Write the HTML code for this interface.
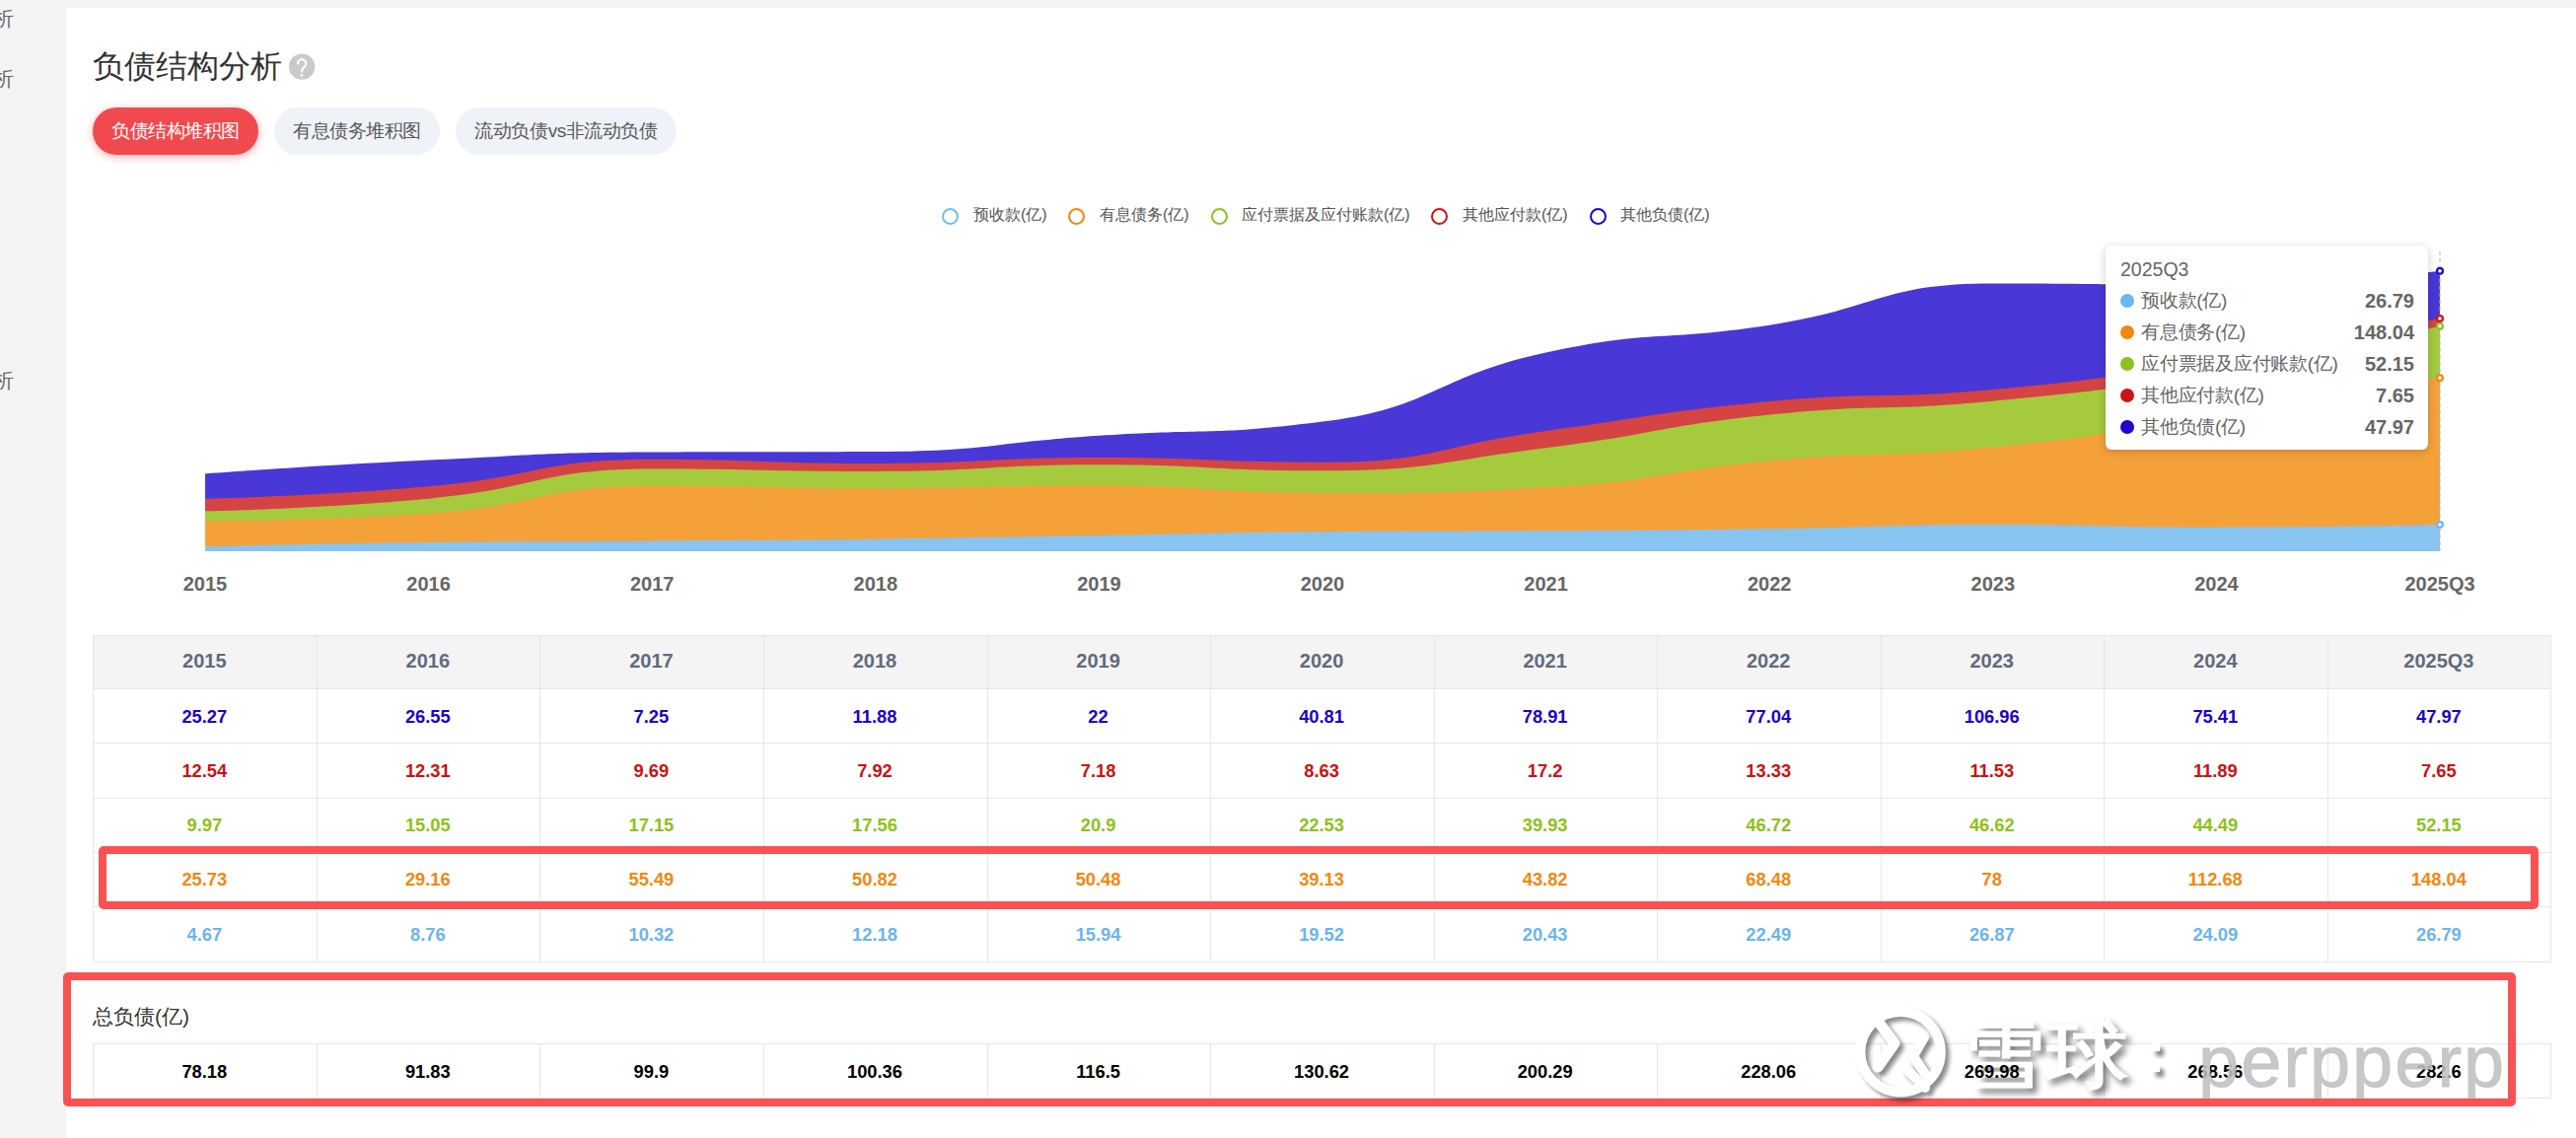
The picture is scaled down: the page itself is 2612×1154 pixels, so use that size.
<!DOCTYPE html>
<html><head><meta charset="utf-8">
<style>
*{box-sizing:border-box;margin:0;padding:0}
html,body{width:2612px;height:1154px;overflow:hidden}
body{background:#f4f4f4;font-family:"Liberation Sans",sans-serif;position:relative}
.side{position:absolute;left:-7px;font-size:21px;color:#666;line-height:21px}
.panel{position:absolute;left:67px;top:8px;width:2545px;height:1146px;background:#fff}
.abs{position:absolute;white-space:nowrap}
.title{left:94px;top:47px;font-size:32px;line-height:40px;color:#333}
.qm{left:293px;top:54px;width:26px;height:27px;border-radius:50%;background:#c8c8c8;color:#fff;font-size:21px;text-align:center;line-height:28px}
.tab{top:109px;height:48px;border-radius:24px;background:#eff2f7;color:#5a5a5a;font-size:19px;letter-spacing:-0.43px;line-height:48px;text-align:center}
.tab.on{background:#f04a4f;color:#fff;box-shadow:0 2px 9px rgba(240,74,79,.45)}
.lg{top:208px;font-size:16px;line-height:20px;color:#555}
.lc{top:210.5px;width:17px;height:17px;border-radius:50%;border:2.8px solid}
.xl{position:absolute;top:578px;width:120px;text-align:center;font-size:20px;font-weight:bold;color:#666;line-height:28px}
.tip{left:2135px;top:249px;width:327px;height:207px;background:#fff;border-radius:6px;box-shadow:0 2px 10px rgba(0,0,0,.2)}
.tt{left:2150px;top:261px;font-size:19.5px;line-height:24px;color:#666}
.tr{left:2143px;width:305px;height:32px}
.tr .d{position:absolute;left:6.5px;top:9px;width:14px;height:14px;border-radius:50%}
.tr .l{position:absolute;left:28px;top:4px;font-size:19px;letter-spacing:-0.25px;line-height:24px;color:#666}
.tr .v{position:absolute;right:0;top:3.5px;font-size:20px;line-height:24px;font-weight:bold;color:#666}
table{border-collapse:collapse;table-layout:fixed}
.tbl{position:absolute;left:94px;top:644px;width:2493px}
.tbl td{border:1px solid #e6e6e6;text-align:center;font-weight:bold;font-size:18px;height:55px;padding:0}
.tbl tr.h td{background:#f4f4f4;color:#5f6b7d;font-size:20px;height:54px}
.tot{position:absolute;left:94px;top:1058px;width:2493px}
.tot td{border:1px solid #e6e6e6;text-align:center;font-weight:bold;font-size:18px;height:56px;color:#000;padding:0}
.zl{left:94px;top:1016px;font-size:21px;line-height:30px;color:#333}
.hl{left:94px;width:2493px;height:1px;background:#e6e6e6}
.vl{width:1px;background:#e6e6e6}
.th{width:200px;text-align:center;font-size:20px;font-weight:bold;color:#5f6b7d}
.tdv{width:200px;text-align:center;font-size:18.3px;font-weight:bold}
.rb{position:absolute;border:8px solid #fa5253;border-radius:5px}
.wm{position:absolute}
</style></head>
<body>
<div class="side abs" style="top:8px">析</div>
<div class="side abs" style="top:69px">析</div>
<div class="side abs" style="top:375px">析</div>
<div class="panel"></div>

<div class="abs title">负债结构分析</div>
<svg class="abs" style="left:285px;top:48px" width="45" height="40" viewBox="285 48 45 40"><circle cx="306.1" cy="67.6" r="13.2" fill="#cacaca"/><path d="M302.1 64.4 A4.1 4.1 0 1 1 309.0 67.3 C307.5 68.8 306.1 69.9 306.1 71.6 L306.1 72.5" fill="none" stroke="#fff" stroke-width="2.1" stroke-linecap="round"/><circle cx="306.0" cy="76.3" r="1.4" fill="#fff"/></svg>
<div class="abs tab on" style="left:94px;width:168px">负债结构堆积图</div>
<div class="abs tab" style="left:278px;width:168px">有息债务堆积图</div>
<div class="abs tab" style="left:462px;width:224px">流动负债vs非流动负债</div>

<div class="abs lc" style="left:955px;border-color:#73bdf0"></div>
<div class="abs lg" style="left:987px">预收款(亿)</div>
<div class="abs lc" style="left:1083px;border-color:#f5860f"></div>
<div class="abs lg" style="left:1115px">有息债务(亿)</div>
<div class="abs lc" style="left:1227.5px;border-color:#8cc21c"></div>
<div class="abs lg" style="left:1259px">应付票据及应付账款(亿)</div>
<div class="abs lc" style="left:1451px;border-color:#cc1414"></div>
<div class="abs lg" style="left:1483px">其他应付款(亿)</div>
<div class="abs lc" style="left:1611.5px;border-color:#2000cc"></div>
<div class="abs lg" style="left:1643px">其他负债(亿)</div>

<svg class="abs" style="left:0;top:0" width="2612" height="1154" viewBox="0 0 2612 1154">
<path d="M208.00 480.32C208.00 480.32 321.23 472.06 434.60 466.60C547.83 461.15 547.86 458.95 661.20 458.49C774.46 458.03 774.64 458.49 887.80 458.03C1001.24 457.56 1001.07 449.41 1114.40 441.81C1227.67 434.20 1230.17 441.81 1341.00 427.61C1456.77 412.79 1452.14 382.54 1567.60 357.59C1678.74 333.57 1681.44 347.11 1794.20 329.68C1908.04 312.08 1906.54 287.54 2020.80 287.54C2133.14 287.54 2134.21 288.97 2247.40 288.97C2360.81 288.97 2474.00 274.86 2474.00 274.86L2474.00 556.89L2247.40 556.89L2020.80 556.89L1794.20 556.89L1567.60 556.89L1341.00 556.89L1114.40 556.89L887.80 556.89L661.20 556.89L434.60 556.89L208.00 556.89Z" fill="#4937d7"/>
<path d="M208.00 505.72C208.00 505.72 321.63 503.24 434.60 493.29C548.23 483.27 547.50 465.78 661.20 465.78C774.10 465.78 774.51 469.97 887.80 469.97C1001.11 469.97 1001.09 463.92 1114.40 463.92C1227.69 463.92 1228.24 468.63 1341.00 468.63C1454.84 468.63 1454.24 452.29 1567.60 436.90C1680.84 421.53 1680.49 417.61 1794.20 407.11C1907.09 396.68 1907.92 405.60 2020.80 395.05C2134.52 384.42 2134.54 382.69 2247.40 364.76C2361.14 346.70 2474.00 323.07 2474.00 323.07L2474.00 556.89L2247.40 556.89L2020.80 556.89L1794.20 556.89L1567.60 556.89L1341.00 556.89L1114.40 556.89L887.80 556.89L661.20 556.89L434.60 556.89L208.00 556.89Z" fill="#d64343"/>
<path d="M208.00 518.32C208.00 518.32 321.71 516.32 434.60 505.66C548.31 494.92 547.41 475.52 661.20 475.52C774.01 475.52 774.52 477.93 887.80 477.93C1001.12 477.93 1001.10 471.13 1114.40 471.13C1227.70 471.13 1227.97 477.31 1341.00 477.31C1454.57 477.31 1454.63 468.35 1567.60 454.19C1681.23 439.95 1680.39 432.45 1794.20 420.51C1906.99 408.67 1907.88 417.55 2020.80 406.64C2134.48 395.65 2134.75 395.58 2247.40 376.72C2361.35 357.64 2474.00 330.76 2474.00 330.76L2474.00 556.89L2247.40 556.89L2020.80 556.89L1794.20 556.89L1567.60 556.89L1341.00 556.89L1114.40 556.89L887.80 556.89L661.20 556.89L434.60 556.89L208.00 556.89Z" fill="#a6ca3d"/>
<path d="M208.00 528.34C208.00 528.34 321.70 528.34 434.60 520.79C548.30 513.17 547.47 492.75 661.20 492.75C774.07 492.75 774.50 495.58 887.80 495.58C1001.10 495.58 1001.13 492.14 1114.40 492.14C1227.73 492.14 1227.68 499.95 1341.00 499.95C1454.28 499.95 1454.68 499.95 1567.60 494.32C1681.28 488.66 1680.61 477.70 1794.20 467.47C1907.21 457.29 1907.95 464.96 2020.80 453.50C2134.55 441.94 2134.33 438.98 2247.40 421.43C2360.93 403.82 2474.00 383.18 2474.00 383.18L2474.00 556.89L2247.40 556.89L2020.80 556.89L1794.20 556.89L1567.60 556.89L1341.00 556.89L1114.40 556.89L887.80 556.89L661.20 556.89L434.60 556.89L208.00 556.89Z" fill="#f5a13a"/>
<path d="M208.00 554.21C208.00 554.21 321.29 551.52 434.60 550.10C547.89 548.68 547.90 549.39 661.20 548.53C774.50 547.67 774.51 548.07 887.80 546.66C1001.11 545.25 1001.10 544.72 1114.40 542.88C1227.70 541.03 1227.69 540.20 1341.00 539.28C1454.29 538.37 1454.30 539.11 1567.60 538.37C1680.90 537.62 1680.91 537.91 1794.20 536.30C1907.51 534.68 1907.49 531.89 2020.80 531.89C2134.09 531.89 2134.10 534.69 2247.40 534.69C2360.70 534.69 2474.00 531.97 2474.00 531.97L2474.00 558.90L2247.40 558.90L2020.80 558.90L1794.20 558.90L1567.60 558.90L1341.00 558.90L1114.40 558.90L887.80 558.90L661.20 558.90L434.60 558.90L208.00 558.90Z" fill="#88c4f0"/>
<line x1="2474" y1="255" x2="2474" y2="558" stroke="#b0b0b0" stroke-width="1" stroke-dasharray="4 3"/>
<circle cx="2474.00" cy="531.97" r="2.9" fill="#fff" stroke="#6cb6ee" stroke-width="2.2"/>
<circle cx="2474.00" cy="383.18" r="2.9" fill="#fff" stroke="#f5860f" stroke-width="2.2"/>
<circle cx="2474.00" cy="330.76" r="2.9" fill="#fff" stroke="#8cc21c" stroke-width="2.2"/>
<circle cx="2474.00" cy="323.07" r="2.9" fill="#fff" stroke="#cc1414" stroke-width="2.2"/>
<circle cx="2474.00" cy="274.86" r="2.9" fill="#fff" stroke="#2000cc" stroke-width="2.2"/>
</svg>
<div class="xl" style="left:148.0px">2015</div><div class="xl" style="left:374.6px">2016</div><div class="xl" style="left:601.2px">2017</div><div class="xl" style="left:827.8px">2018</div><div class="xl" style="left:1054.4px">2019</div><div class="xl" style="left:1281.0px">2020</div><div class="xl" style="left:1507.6px">2021</div><div class="xl" style="left:1734.2px">2022</div><div class="xl" style="left:1960.8px">2023</div><div class="xl" style="left:2187.4px">2024</div><div class="xl" style="left:2414.0px">2025Q3</div>

<div class="abs tip"></div>
<div class="abs tt">2025Q3</div>
<div class="abs tr" style="top:289px"><span class="d" style="background:#6cb6ee"></span><span class="l">预收款(亿)</span><span class="v">26.79</span></div>
<div class="abs tr" style="top:321px"><span class="d" style="background:#f5860f"></span><span class="l">有息债务(亿)</span><span class="v">148.04</span></div>
<div class="abs tr" style="top:353px"><span class="d" style="background:#8cc21c"></span><span class="l">应付票据及应付账款(亿)</span><span class="v">52.15</span></div>
<div class="abs tr" style="top:385px"><span class="d" style="background:#cc1414"></span><span class="l">其他应付款(亿)</span><span class="v">7.65</span></div>
<div class="abs tr" style="top:417px"><span class="d" style="background:#2000cc"></span><span class="l">其他负债(亿)</span><span class="v">47.97</span></div>

<div class="abs" style="left:94px;top:644px;width:2493px;height:54px;background:#f4f4f4"></div>
<div class="abs hl" style="top:644px"></div>
<div class="abs hl" style="top:698px"></div>
<div class="abs hl" style="top:753px"></div>
<div class="abs hl" style="top:809px"></div>
<div class="abs hl" style="top:864px"></div>
<div class="abs hl" style="top:919px"></div>
<div class="abs hl" style="top:975px"></div>
<div class="abs vl" style="left:94px;top:644px;height:332px"></div>
<div class="abs vl" style="left:321px;top:644px;height:332px"></div>
<div class="abs vl" style="left:547px;top:644px;height:332px"></div>
<div class="abs vl" style="left:774px;top:644px;height:332px"></div>
<div class="abs vl" style="left:1001px;top:644px;height:332px"></div>
<div class="abs vl" style="left:1227px;top:644px;height:332px"></div>
<div class="abs vl" style="left:1454px;top:644px;height:332px"></div>
<div class="abs vl" style="left:1680px;top:644px;height:332px"></div>
<div class="abs vl" style="left:1907px;top:644px;height:332px"></div>
<div class="abs vl" style="left:2133px;top:644px;height:332px"></div>
<div class="abs vl" style="left:2360px;top:644px;height:332px"></div>
<div class="abs vl" style="left:2586px;top:644px;height:332px"></div>
<div class="abs th" style="left:107.28px;top:643.00px;height:54.00px;line-height:54.00px">2015</div>
<div class="abs th" style="left:333.84px;top:643.00px;height:54.00px;line-height:54.00px">2016</div>
<div class="abs th" style="left:560.40px;top:643.00px;height:54.00px;line-height:54.00px">2017</div>
<div class="abs th" style="left:786.96px;top:643.00px;height:54.00px;line-height:54.00px">2018</div>
<div class="abs th" style="left:1013.52px;top:643.00px;height:54.00px;line-height:54.00px">2019</div>
<div class="abs th" style="left:1240.08px;top:643.00px;height:54.00px;line-height:54.00px">2020</div>
<div class="abs th" style="left:1466.64px;top:643.00px;height:54.00px;line-height:54.00px">2021</div>
<div class="abs th" style="left:1693.20px;top:643.00px;height:54.00px;line-height:54.00px">2022</div>
<div class="abs th" style="left:1919.76px;top:643.00px;height:54.00px;line-height:54.00px">2023</div>
<div class="abs th" style="left:2146.32px;top:643.00px;height:54.00px;line-height:54.00px">2024</div>
<div class="abs th" style="left:2372.88px;top:643.00px;height:54.00px;line-height:54.00px">2025Q3</div>
<div class="abs tdv" style="left:107.28px;top:698.50px;height:55.00px;line-height:55.00px;color:#2000cc">25.27</div>
<div class="abs tdv" style="left:333.84px;top:698.50px;height:55.00px;line-height:55.00px;color:#2000cc">26.55</div>
<div class="abs tdv" style="left:560.40px;top:698.50px;height:55.00px;line-height:55.00px;color:#2000cc">7.25</div>
<div class="abs tdv" style="left:786.96px;top:698.50px;height:55.00px;line-height:55.00px;color:#2000cc">11.88</div>
<div class="abs tdv" style="left:1013.52px;top:698.50px;height:55.00px;line-height:55.00px;color:#2000cc">22</div>
<div class="abs tdv" style="left:1240.08px;top:698.50px;height:55.00px;line-height:55.00px;color:#2000cc">40.81</div>
<div class="abs tdv" style="left:1466.64px;top:698.50px;height:55.00px;line-height:55.00px;color:#2000cc">78.91</div>
<div class="abs tdv" style="left:1693.20px;top:698.50px;height:55.00px;line-height:55.00px;color:#2000cc">77.04</div>
<div class="abs tdv" style="left:1919.76px;top:698.50px;height:55.00px;line-height:55.00px;color:#2000cc">106.96</div>
<div class="abs tdv" style="left:2146.32px;top:698.50px;height:55.00px;line-height:55.00px;color:#2000cc">75.41</div>
<div class="abs tdv" style="left:2372.88px;top:698.50px;height:55.00px;line-height:55.00px;color:#2000cc">47.97</div>
<div class="abs tdv" style="left:107.28px;top:753.50px;height:56.00px;line-height:56.00px;color:#cc1111">12.54</div>
<div class="abs tdv" style="left:333.84px;top:753.50px;height:56.00px;line-height:56.00px;color:#cc1111">12.31</div>
<div class="abs tdv" style="left:560.40px;top:753.50px;height:56.00px;line-height:56.00px;color:#cc1111">9.69</div>
<div class="abs tdv" style="left:786.96px;top:753.50px;height:56.00px;line-height:56.00px;color:#cc1111">7.92</div>
<div class="abs tdv" style="left:1013.52px;top:753.50px;height:56.00px;line-height:56.00px;color:#cc1111">7.18</div>
<div class="abs tdv" style="left:1240.08px;top:753.50px;height:56.00px;line-height:56.00px;color:#cc1111">8.63</div>
<div class="abs tdv" style="left:1466.64px;top:753.50px;height:56.00px;line-height:56.00px;color:#cc1111">17.2</div>
<div class="abs tdv" style="left:1693.20px;top:753.50px;height:56.00px;line-height:56.00px;color:#cc1111">13.33</div>
<div class="abs tdv" style="left:1919.76px;top:753.50px;height:56.00px;line-height:56.00px;color:#cc1111">11.53</div>
<div class="abs tdv" style="left:2146.32px;top:753.50px;height:56.00px;line-height:56.00px;color:#cc1111">11.89</div>
<div class="abs tdv" style="left:2372.88px;top:753.50px;height:56.00px;line-height:56.00px;color:#cc1111">7.65</div>
<div class="abs tdv" style="left:107.28px;top:808.50px;height:55.00px;line-height:55.00px;color:#8cc21a">9.97</div>
<div class="abs tdv" style="left:333.84px;top:808.50px;height:55.00px;line-height:55.00px;color:#8cc21a">15.05</div>
<div class="abs tdv" style="left:560.40px;top:808.50px;height:55.00px;line-height:55.00px;color:#8cc21a">17.15</div>
<div class="abs tdv" style="left:786.96px;top:808.50px;height:55.00px;line-height:55.00px;color:#8cc21a">17.56</div>
<div class="abs tdv" style="left:1013.52px;top:808.50px;height:55.00px;line-height:55.00px;color:#8cc21a">20.9</div>
<div class="abs tdv" style="left:1240.08px;top:808.50px;height:55.00px;line-height:55.00px;color:#8cc21a">22.53</div>
<div class="abs tdv" style="left:1466.64px;top:808.50px;height:55.00px;line-height:55.00px;color:#8cc21a">39.93</div>
<div class="abs tdv" style="left:1693.20px;top:808.50px;height:55.00px;line-height:55.00px;color:#8cc21a">46.72</div>
<div class="abs tdv" style="left:1919.76px;top:808.50px;height:55.00px;line-height:55.00px;color:#8cc21a">46.62</div>
<div class="abs tdv" style="left:2146.32px;top:808.50px;height:55.00px;line-height:55.00px;color:#8cc21a">44.49</div>
<div class="abs tdv" style="left:2372.88px;top:808.50px;height:55.00px;line-height:55.00px;color:#8cc21a">52.15</div>
<div class="abs tdv" style="left:107.28px;top:863.50px;height:55.00px;line-height:55.00px;color:#f5860f">25.73</div>
<div class="abs tdv" style="left:333.84px;top:863.50px;height:55.00px;line-height:55.00px;color:#f5860f">29.16</div>
<div class="abs tdv" style="left:560.40px;top:863.50px;height:55.00px;line-height:55.00px;color:#f5860f">55.49</div>
<div class="abs tdv" style="left:786.96px;top:863.50px;height:55.00px;line-height:55.00px;color:#f5860f">50.82</div>
<div class="abs tdv" style="left:1013.52px;top:863.50px;height:55.00px;line-height:55.00px;color:#f5860f">50.48</div>
<div class="abs tdv" style="left:1240.08px;top:863.50px;height:55.00px;line-height:55.00px;color:#f5860f">39.13</div>
<div class="abs tdv" style="left:1466.64px;top:863.50px;height:55.00px;line-height:55.00px;color:#f5860f">43.82</div>
<div class="abs tdv" style="left:1693.20px;top:863.50px;height:55.00px;line-height:55.00px;color:#f5860f">68.48</div>
<div class="abs tdv" style="left:1919.76px;top:863.50px;height:55.00px;line-height:55.00px;color:#f5860f">78</div>
<div class="abs tdv" style="left:2146.32px;top:863.50px;height:55.00px;line-height:55.00px;color:#f5860f">112.68</div>
<div class="abs tdv" style="left:2372.88px;top:863.50px;height:55.00px;line-height:55.00px;color:#f5860f">148.04</div>
<div class="abs tdv" style="left:107.28px;top:919.50px;height:56.00px;line-height:56.00px;color:#6cb4ee">4.67</div>
<div class="abs tdv" style="left:333.84px;top:919.50px;height:56.00px;line-height:56.00px;color:#6cb4ee">8.76</div>
<div class="abs tdv" style="left:560.40px;top:919.50px;height:56.00px;line-height:56.00px;color:#6cb4ee">10.32</div>
<div class="abs tdv" style="left:786.96px;top:919.50px;height:56.00px;line-height:56.00px;color:#6cb4ee">12.18</div>
<div class="abs tdv" style="left:1013.52px;top:919.50px;height:56.00px;line-height:56.00px;color:#6cb4ee">15.94</div>
<div class="abs tdv" style="left:1240.08px;top:919.50px;height:56.00px;line-height:56.00px;color:#6cb4ee">19.52</div>
<div class="abs tdv" style="left:1466.64px;top:919.50px;height:56.00px;line-height:56.00px;color:#6cb4ee">20.43</div>
<div class="abs tdv" style="left:1693.20px;top:919.50px;height:56.00px;line-height:56.00px;color:#6cb4ee">22.49</div>
<div class="abs tdv" style="left:1919.76px;top:919.50px;height:56.00px;line-height:56.00px;color:#6cb4ee">26.87</div>
<div class="abs tdv" style="left:2146.32px;top:919.50px;height:56.00px;line-height:56.00px;color:#6cb4ee">24.09</div>
<div class="abs tdv" style="left:2372.88px;top:919.50px;height:56.00px;line-height:56.00px;color:#6cb4ee">26.79</div>

<div class="abs zl">总负债(亿)</div>
<div class="abs hl" style="top:1058px"></div>
<div class="abs hl" style="top:1113px"></div>
<div class="abs vl" style="left:94px;top:1058px;height:56px"></div>
<div class="abs vl" style="left:321px;top:1058px;height:56px"></div>
<div class="abs vl" style="left:547px;top:1058px;height:56px"></div>
<div class="abs vl" style="left:774px;top:1058px;height:56px"></div>
<div class="abs vl" style="left:1001px;top:1058px;height:56px"></div>
<div class="abs vl" style="left:1227px;top:1058px;height:56px"></div>
<div class="abs vl" style="left:1454px;top:1058px;height:56px"></div>
<div class="abs vl" style="left:1680px;top:1058px;height:56px"></div>
<div class="abs vl" style="left:1907px;top:1058px;height:56px"></div>
<div class="abs vl" style="left:2133px;top:1058px;height:56px"></div>
<div class="abs vl" style="left:2360px;top:1058px;height:56px"></div>
<div class="abs vl" style="left:2586px;top:1058px;height:56px"></div>
<div class="wm" style="z-index:5;left:1860px;top:1000px;width:140px;height:130px;filter:drop-shadow(4px 4px 2px rgba(0,0,0,.45))">
<svg width="140" height="130" viewBox="1860 1000 140 130">
<g fill="none" stroke="#fff" stroke-linecap="round" stroke-linejoin="round">
<circle cx="1927.1" cy="1066.7" r="40.7" stroke-width="10"/>
<path d="M1903 1034 L1921 1058 L1904 1082" stroke-width="11"/>
<path d="M1951 1052 L1940 1071 L1952 1089" stroke-width="10"/>
<path d="M1933 1084 L1952 1103" stroke-width="10"/>
</g>
</svg></div>
<div class="wm abs" style="left:1990px;top:1014.5px;font-size:74px;font-weight:bold;letter-spacing:2px;line-height:110px;color:#fff;transform:scaleX(1.12);transform-origin:0 0;filter:drop-shadow(4px 5px 3px rgba(0,0,0,.5))">雪球</div>
<div class="wm" style="left:2180px;top:1055px;width:14px;height:36px;filter:drop-shadow(4px 5px 2px rgba(0,0,0,.5))"><div style="position:absolute;left:2px;top:3px;width:8px;height:8px;background:#fff"></div><div style="position:absolute;left:2px;top:24px;width:8px;height:8px;background:#fff"></div></div>
<div class="abs tdv" style="left:107.28px;top:1058.50px;height:55.00px;line-height:55.00px;color:#000">78.18</div>
<div class="abs tdv" style="left:333.84px;top:1058.50px;height:55.00px;line-height:55.00px;color:#000">91.83</div>
<div class="abs tdv" style="left:560.40px;top:1058.50px;height:55.00px;line-height:55.00px;color:#000">99.9</div>
<div class="abs tdv" style="left:786.96px;top:1058.50px;height:55.00px;line-height:55.00px;color:#000">100.36</div>
<div class="abs tdv" style="left:1013.52px;top:1058.50px;height:55.00px;line-height:55.00px;color:#000">116.5</div>
<div class="abs tdv" style="left:1240.08px;top:1058.50px;height:55.00px;line-height:55.00px;color:#000">130.62</div>
<div class="abs tdv" style="left:1466.64px;top:1058.50px;height:55.00px;line-height:55.00px;color:#000">200.29</div>
<div class="abs tdv" style="left:1693.20px;top:1058.50px;height:55.00px;line-height:55.00px;color:#000">228.06</div>
<div class="abs tdv" style="left:1919.76px;top:1058.50px;height:55.00px;line-height:55.00px;color:#000">269.98</div>
<div class="abs tdv" style="left:2146.32px;top:1058.50px;height:55.00px;line-height:55.00px;color:#000">268.56</div>
<div class="abs tdv" style="left:2372.88px;top:1058.50px;height:55.00px;line-height:55.00px;color:#000">282.6</div>

<div class="wm abs" style="left:2229px;top:1027px;font-size:74px;letter-spacing:2px;-webkit-text-stroke:0.9px rgba(192,192,192,.88);line-height:100px;color:rgba(192,192,192,.88)">perpperp</div>
<div class="rb" style="left:100px;top:858px;width:2474px;height:64px"></div>
<div class="rb" style="left:64px;top:986px;width:2487px;height:136px"></div>



</body></html>
